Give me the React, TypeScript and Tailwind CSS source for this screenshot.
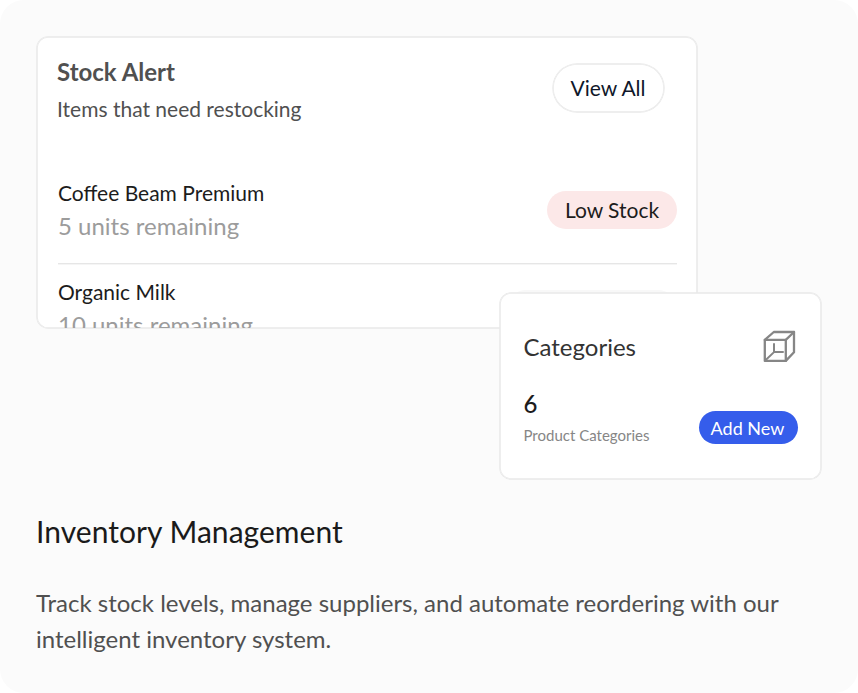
function CubeIcon() {
  return (
    <svg
      className="h-9 w-9 shrink-0"
      viewBox="0.4 0.4 36 36"
      fill="none"
      stroke="#868686"
      strokeWidth="2.3"
      strokeLinecap="round"
      strokeLinejoin="round"
    >
      <path d="M4.2 11.3H25.2V32.3H4.2Z" />
      <path d="M4.2 11.3L13.2 3.4H33.4V23.6L25.2 32.3" />
      <path d="M25.2 11.3L33.4 3.4" />
      <path d="M13.4 15.4V23.5H22.4" strokeWidth="2" />
      <path d="M13.4 23.5L4.6 31.9" strokeWidth="2" />
    </svg>
  );
}

function StockRow({ name, units }: { name: string; units: string }) {
  return (
    <div>
      <p className="text-[21px] leading-[30px] text-[#1c1c1c]">{name}</p>
      <p className="mt-[3px] text-[24px] leading-[30px] text-[#9c9c9c]">{units}</p>
    </div>
  );
}

export default function App() {
  return (
    <div className="bg-white font-['Lato',sans-serif]">
      <section className="relative flex h-[693px] w-[858px] flex-col overflow-hidden rounded-[24px] bg-[#fbfbfb] px-9 pt-[37px]">
        <div className="ml-px h-[291px] w-[660px] shrink-0 overflow-hidden rounded-[11px] bg-white pt-5 pr-[21px] pl-5 shadow-[0_0_0_0.75px_#e9e9e9,inset_0_0_0_0.75px_#e9e9e9]">
          <header className="flex items-start justify-between">
            <div className="text-[#505050]">
              <h3 className="text-[24px] leading-[30px] font-bold">Stock Alert</h3>
              <p className="mt-[7px] text-[21px] leading-[30px]">Items that need restocking</p>
            </div>
            <button className="mt-[7px] mr-3 h-12 w-[111px] rounded-full pr-px text-[21px] leading-[30px] whitespace-nowrap text-[#0f172a] shadow-[0_0_0_0.75px_#e9e9e9,inset_0_0_0_0.75px_#e9e9e9]">
              View All
            </button>
          </header>
          <div className="mt-[54px] -mr-px ml-px flex h-[85px] items-start justify-between shadow-[0_1.4px_0_#e6e6e6]">
            <StockRow name="Coffee Beam Premium" units="5 units remaining" />
            <span className="mt-[13px] flex h-[38px] w-[130px] items-center justify-center rounded-full bg-[#fce8e8] text-[21px] text-[#1c1c1c]">
              Low Stock
            </span>
          </div>
          <div className="mt-[14px] -mr-px ml-px flex items-start justify-between">
            <StockRow name="Organic Milk" units="10 units remaining" />
            <span className="mt-[13px] h-[38px] w-[170px] rounded-full bg-[#f8f8f8]" />
          </div>
        </div>

        <div className="absolute top-[293px] left-[500px] flex h-[186px] w-[321px] flex-col rounded-[11px] bg-white pt-9 pr-6 pl-[23.5px] shadow-[0_0_0_0.75px_#e9e9e9,inset_0_0_0_0.75px_#e9e9e9]">
          <div className="flex items-start justify-between">
            <h3 className="mt-[3px] text-[24px] leading-[30px] text-[#333]">Categories</h3>
            <CubeIcon />
          </div>
          <div className="mt-[24px] flex items-start justify-between">
            <div>
              <p className="text-[24px] leading-[30px] font-medium text-[#1c1c1c]">6</p>
              <p className="mt-[6px] text-[15px] leading-5 text-[#868686]">Product Categories</p>
            </div>
            <button className="mt-[22px] -mr-px h-[33px] w-[99px] rounded-full bg-[#355deb] pr-[2px] text-[18px] leading-6 whitespace-nowrap text-white">
              Add New
            </button>
          </div>
        </div>

        <h2 className="mt-[185px] text-[30px] leading-9 tracking-[0.04px] text-[#1a1a1a]">Inventory Management</h2>
        <p className="mt-9 text-[24px] leading-9 text-[#505050]">
          Track stock levels, manage suppliers, and automate reordering with our
          <br />
          intelligent inventory system.
        </p>
      </section>
    </div>
  );
}
